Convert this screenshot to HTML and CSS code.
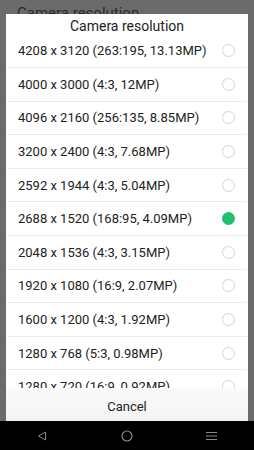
FILE: index.html
```html
<!DOCTYPE html>
<html lang="en">
<head>
  <meta charset="UTF-8">
  <meta name="viewport" content="width=device-width, initial-scale=1.0">
  <title>Camera resolution</title>
  <link rel="stylesheet" href="styles.css">
</head>
<body>
  <div class="screen">
    <div class="page">
      <div class="page-title">Camera resolution</div>

      <div class="dialog">
        <div class="dialog-title">Camera resolution</div>
        <div class="options">
          <div class="option"><span>4208 x 3120 (263:195, 13.13MP)</span><i class="radio"></i></div>
          <div class="option"><span>4000 x 3000 (4:3, 12MP)</span><i class="radio"></i></div>
          <div class="option"><span>4096 x 2160 (256:135, 8.85MP)</span><i class="radio"></i></div>
          <div class="option"><span>3200 x 2400 (4:3, 7.68MP)</span><i class="radio"></i></div>
          <div class="option"><span>2592 x 1944 (4:3, 5.04MP)</span><i class="radio"></i></div>
          <div class="option"><span>2688 x 1520 (168:95, 4.09MP)</span><i class="radio checked"></i></div>
          <div class="option"><span>2048 x 1536 (4:3, 3.15MP)</span><i class="radio"></i></div>
          <div class="option"><span>1920 x 1080 (16:9, 2.07MP)</span><i class="radio"></i></div>
          <div class="option"><span>1600 x 1200 (4:3, 1.92MP)</span><i class="radio"></i></div>
          <div class="option"><span>1280 x 768 (5:3, 0.98MP)</span><i class="radio"></i></div>
          <div class="option"><span>1280 x 720 (16:9, 0.92MP)</span><i class="radio"></i></div>
        </div>
        <div class="cancel">Cancel</div>
      </div>
    </div>

    <div class="navbar">
      <svg width="10" height="10" viewBox="0 0 10 10"><path d="M8.5 1 L1.5 5 L8.5 9 Z" fill="none" stroke="#8a8a8a" stroke-width="1"/></svg>
      <svg width="12" height="12" viewBox="0 0 12 12"><circle cx="6" cy="6" r="5" fill="none" stroke="#8a8a8a" stroke-width="1.2"/></svg>
      <svg width="11" height="10" viewBox="0 0 11 10"><path d="M0 1.5 H11 M0 5 H11 M0 8.5 H11" stroke="#8a8a8a" stroke-width="1.2"/></svg>
    </div>
  </div>
</body>
</html>
```

FILE: styles.css
```css
html {
  background-color: #000;
}

body {
  margin: 0;
  font-family: Roboto, 'Noto Sans', sans-serif;
  color: #222;
}

.screen {
  width: 254px;
  height: 450px;
  display: flex;
  flex-direction: column;
  overflow: hidden;
}

.page {
  position: relative;
  flex: 0 0 421px;
  background: #6b6b6b;
}

.page-title {
  padding: 4px 0 0 17px;
  font-size: 15px;
  color: #2b2b2b;
}

/* dialog sits over the page */
.dialog {
  position: absolute;
  left: 6px;
  top: 14px;
  width: 242px;
  height: 407px;
  background: #fff;
  display: flex;
  flex-direction: column;
}

.dialog-title {
  height: 20.4px;
  padding-top: 2px;
  box-sizing: border-box;
  line-height: 20px;
  text-align: center;
  font-size: 14px;
  color: #1e1e1e;
}

.options {
  flex: 1;
  overflow: hidden;
}

.option {
  height: 33.6px;
  box-sizing: border-box;
  display: flex;
  align-items: center;
  justify-content: space-between;
  padding: 0 12px 0 11px;
  margin: 0 1px;
  border-bottom: 1px solid #ececec;
  font-size: 13px;
}

.radio {
  width: 11px;
  height: 11px;
  border: 1px solid #d4d4d4;
  border-radius: 50%;
}

.radio.checked {
  width: 13px;
  height: 13px;
  border: none;
  background: #1fc06f;
}

.cancel {
  flex: 0 0 33px;
  box-sizing: border-box;
  padding-top: 3px;
  display: flex;
  align-items: center;
  justify-content: center;
  font-size: 13px;
  color: #222;
  background: linear-gradient(#fafafa, #f4f4f4);
}

.navbar {
  flex: 1;
  background: #000;
  display: flex;
  align-items: center;
  justify-content: space-between;
  padding: 0 37px 0 37px;
}
```
